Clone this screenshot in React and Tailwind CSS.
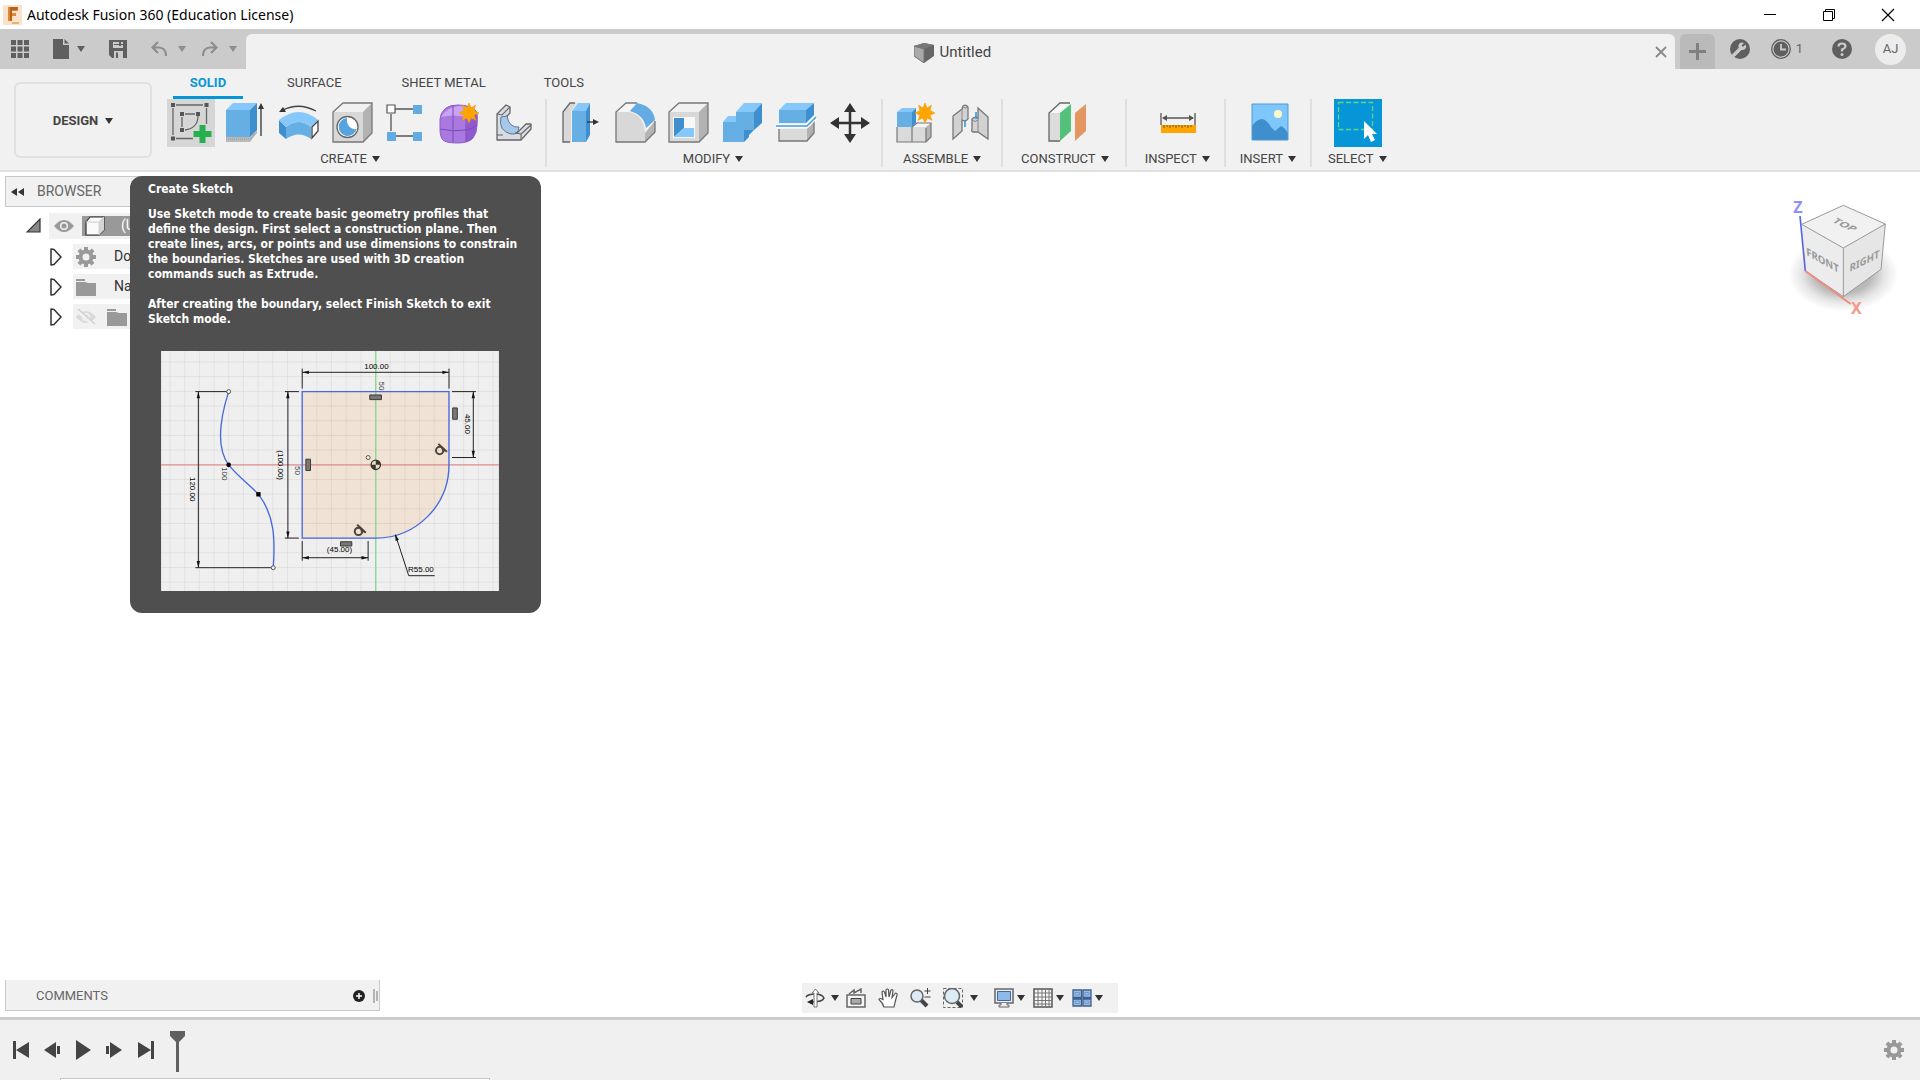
import React from "react";

const Caret = ({ className = "text-[#333]" }) => (
  <svg width="8" height="6" viewBox="0 0 8 6" className={`shrink-0 ${className}`} aria-hidden="true">
    <path d="M0 0H8L4 6Z" fill="currentColor" />
  </svg>
);

const Svg = ({ w = 48, h = 48, vb, children, className = "" }) => (
  <svg width={w} height={h} viewBox={vb || `0 0 ${w} ${h}`} className={`block shrink-0 ${className}`} fill="none" aria-hidden="true">
    {children}
  </svg>
);

const Sun = ({ x, y }) => (
  <path
    transform={`translate(${x} ${y})`}
    d="M0-10 2-5 6.400-7.800 5-2.600 10 0 5 2.200 7 7.300 2.200 5 0 10-2.200 5-7 7.300-5 2.200-10 0-5-2.600-6.400-7.800-2-5Z"
    fill="#ffa500"
    stroke="#f19a0a"
    strokeWidth=".6"
  />
);

const SketchIcon = () => (
  <Svg>
    <path d="M9 6H36M6 9V36M39.500 9V25M9 39.500H26M18 15H28M15 18V28M31 17C31 25 26 30 18 31" stroke="#666" strokeWidth="1.300" />
    <path d="M4 4h4v4H4zM37.500 4h4v4h-4zM4 37.500h4v4H4zM13 13h4v4h-4zM29 13h4v4h-4zM13 29h4v4h-4z" fill="#555" />
    <path d="M32.500 26h6v6h6v6h-6v6h-6v-6h-6v-6h6z" fill="#27ae4e" />
  </Svg>
);

const ExtrudeIcon = () => (
  <Svg>
    <path d="M5 38H29L36 31V34L29 43H5Z" fill="#b9b9b9" />
    <path d="M5 40H29L36 33" stroke="#9a9a9a" strokeWidth="1" strokeDasharray="1 1" />
    <path d="M5 11H29V38H5Z" fill="#66afe5" />
    <path d="M5 11 12 4H36L29 11Z" fill="#86c8fb" />
    <path d="M29 11 36 4V31L29 38Z" fill="#3f8fce" />
    <path d="M40 37V8" stroke="#333" strokeWidth="1.300" />
    <path d="M40 4 43 10H37Z" fill="#333" />
  </Svg>
);

const RevolveIcon = () => (
  <Svg>
    <path d="M4 21 11 28V40L4 34Z" fill="#3f8fce" />
    <path d="M11 28Q24 18 36 28V40Q24 31 11 40Z" fill="#66afe5" />
    <path d="M4 21Q24 5 43 21L36 28Q24 18 11 28Z" fill="#86c8fb" />
    <path d="M37 28 43 22V32L37 39Z" fill="#fff" stroke="#444" strokeWidth="1.300" />
    <path d="M8 11Q24 3 41 12" stroke="#444" strokeWidth="1.300" />
    <path d="M4 13 8 8 11 13Z" fill="#333" />
  </Svg>
);

const HoleIcon = () => (
  <Svg>
    <path d="M4 13 14 4H43L34 13Z" fill="#f1f1f1" />
    <path d="M34 13 43 4V34L34 43Z" fill="#b2b2b2" />
    <path d="M4 13H34V43H4Z" fill="#d8d8d8" />
    <path d="M4 43V13L14 4H43V34L34 43Z" stroke="#777" strokeWidth="1.300" />
    <circle cx="18.500" cy="28" r="10.500" fill="#fff" stroke="#666" strokeWidth="1.300" />
    <path d="M18 19A9 9 0 1 0 27.500 30C22 31 17 26 18 19Z" fill="#56a3df" />
  </Svg>
);

const PatternIcon = () => (
  <Svg>
    <path d="M12 10H30M8 15V32M12 37H30" stroke="#555" strokeWidth="1.300" />
    <path d="M4 6h8v8H4z" fill="#fff" stroke="#555" strokeWidth="1.200" />
    <path d="M30 6h9v9h-9zM4 33h9v9H4zM30 33h9v9h-9z" fill="#62abe3" />
  </Svg>
);

const FormIcon = () => (
  <Svg>
    <path d="M3 20Q3 14 9 9 13 6 21 6 33 6 39 12 41 14 40 26 40 34 36 39 32 44 20 44 9 44 6 41 3 38 3 30Z" fill="#a979e0" />
    <path d="M4 18Q10 8 22 7 33 7 38 12 34 19 29 18 16 15 4 18Z" fill="#c9a4f5" />
    <path d="M30 18Q37 17 40 14V27Q39 35 34 41L29 43Z" fill="#8f59cf" />
    <path d="M16 7V43M29 17V43M3 30Q15 33 29 31 36 30 40 26" stroke="#7b4bb9" strokeWidth="1" />
    <path d="M3 20Q3 14 9 9 13 6 21 6 33 6 39 12 41 14 40 26 40 34 36 39 32 44 20 44 9 44 6 41 3 38 3 30Z" stroke="#8d5ccb" strokeWidth="1" />
    <Sun x={32} y={14} />
  </Svg>
);

const SheetIcon = () => (
  <Svg>
    <path d="M6 15 15 6 19 8V14L14 19Q13 33 26 34L35 25H40V30L30 41H6Z" fill="#d9dde2" stroke="#666" strokeWidth="1.300" strokeLinejoin="round" />
    <path d="M10 18Q7 32 20 35 27 36 28 28 18 29 16 17Z" fill="#a9c8e8" stroke="#55779c" strokeWidth="1" />
    <path d="M6 15 11 16 19 8M30 41V35L40 26M6 36H12M30 35 24 34" stroke="#666" strokeWidth="1.100" />
  </Svg>
);

const PressPullIcon = () => (
  <Svg>
    <path d="M14 43H6V13L14 4H20L14 12Z" fill="#d8d8d8" />
    <path d="M13 43H6V13L13 4H18" stroke="#666" strokeWidth="1.300" />
    <path d="M15 12H29V43H15Z" fill="#66afe5" />
    <path d="M15 12 21 4H33L29 12Z" fill="#86c8fb" />
    <path d="M29 12 33 4V36L29 43Z" fill="#3f8fce" />
    <path d="M30 23H38" stroke="#333" strokeWidth="1.300" />
    <path d="M42 23 36 20V26Z" fill="#333" />
  </Svg>
);

const FilletIcon = () => (
  <Svg>
    <path d="M5 43V13H18Q33 16 34 34V43Z" fill="#d8d8d8" />
    <path d="M5 13 15 4H26L18 13Z" fill="#f5f5f5" />
    <path d="M34 34 44 22V34L34 43Z" fill="#b5b5b5" />
    <path d="M26 4H15L5 13V43H34L44 33V22" stroke="#777" strokeWidth="1.300" />
    <path d="M19 12 26 4Q42 7 44 21L35 29Q33 16 19 12Z" fill="#62abe3" />
  </Svg>
);

const ShellIcon = () => (
  <Svg>
    <path d="M4 13 14 4H43L34 13Z" fill="#f1f1f1" />
    <path d="M34 13 43 4V34L34 43Z" fill="#b2b2b2" />
    <path d="M4 13H34V43H4Z" fill="#d8d8d8" />
    <path d="M4 43V13L14 4H43V34L34 43Z" stroke="#777" strokeWidth="1.300" />
    <path d="M8 18H30V39H8Z" fill="#f8f8f8" />
    <path d="M9 19H19V29L9 38Z" fill="#3f8fce" />
    <path d="M9 38 19 29H29V38Z" fill="#86c8fb" />
  </Svg>
);

const CombineIcon = () => (
  <Svg>
    <path d="M4 23H17V13H35V31H25V43H4Z" fill="#66afe5" />
    <path d="M4 23 9 17H17V23ZM17 13 25 4H43L35 13Z" fill="#86c8fb" />
    <path d="M35 13 43 4V24L35 31ZM25 31H35L30 36V38L25 43Z" fill="#3f8fce" />
  </Svg>
);

const SplitIcon = () => (
  <Svg>
    <path d="M6 11H33V24H6Z" fill="#66afe5" />
    <path d="M6 11 13 4H41L33 11Z" fill="#86c8fb" />
    <path d="M33 11 41 4V16L33 24Z" fill="#3f8fce" />
    <path d="M6 30H34L41 23V34L34 42H6Z" fill="#dadada" />
    <path d="M34 30 41 23V34L34 42Z" fill="#b2b2b2" />
    <path d="M6 30V42H34L41 34V22" stroke="#777" strokeWidth="1.300" />
    <path d="M3 27H34L43 18" stroke="#fff" strokeWidth="4" />
    <path d="M3 27H34L43 18" stroke="#3d9fe0" strokeWidth="1.500" />
  </Svg>
);

const MoveIcon = () => (
  <Svg>
    <path d="M23 10V38M9 24H37" stroke="#333" strokeWidth="2.500" />
    <path d="M23 4 29 13H17ZM23 44 29 35H17ZM3 24 12 18V30ZM43 24 34 18V30Z" fill="#333" />
  </Svg>
);

const ComponentIcon = () => (
  <Svg>
    <path d="M4 28H19V43H4ZM19 28H33V43H19Z" fill="#dadada" />
    <path d="M19 28 24 24H38L33 28Z" fill="#f4f4f4" />
    <path d="M33 28 38 24V38L33 43Z" fill="#b5b5b5" />
    <path d="M4 28V43H33L38 38V24H24L19 28V43M33 29V43" stroke="#777" strokeWidth="1.200" />
    <path d="M4 13H19V28H4Z" fill="#66afe5" />
    <path d="M4 13 9 9H23L19 13Z" fill="#86c8fb" />
    <path d="M19 13 23 9V24L19 28Z" fill="#3f8fce" />
    <Sun x={32} y={14} />
  </Svg>
);

const JointIcon = () => (
  <Svg>
    <path d="M6 17 15 10 16 7Q19 5 21 8V20Q19 23 15 21V32L6 40Z" fill="#d2d2d2" stroke="#777" strokeWidth="1.300" />
    <path d="M15 10V21M16 8Q18 10 21 8" stroke="#888" />
    <path d="M31 9 41 18V40L31 33 26 33Q24 32 25 30V20Q28 17 31 19Z" fill="#d2d2d2" stroke="#777" strokeWidth="1.300" />
    <path d="M31 19V33M25 21Q28 24 31 21" stroke="#888" />
    <path d="M18 22V28M29 13V20" stroke="#1e9be0" strokeWidth="1.500" />
  </Svg>
);

const PlaneIcon = () => (
  <Svg>
    <path d="M7 42V14L18 4H28L18 14V42Z" fill="#dcdcdc" />
    <path d="M7 14 18 4H28L18 14Z" fill="#f6f6f6" />
    <path d="M18 42H7V14L18 4H28" stroke="#666" strokeWidth="1.300" />
    <path d="M18 14 29 5V32L18 42Z" fill="#53c17a" />
    <path d="M33 14 44 5V32L33 42Z" fill="#e3965f" />
  </Svg>
);

const MeasureIcon = () => (
  <Svg>
    <path d="M8 14V26M42 14V26M10 19H40" stroke="#555" strokeWidth="1.300" />
    <path d="M9 19 14 16V22ZM41 19 36 16V22Z" fill="#555" />
    <path d="M8 26H43V34H8Z" fill="#ffa500" />
    <path d="M11 26v3M14 26v2M17 26v3M20 26v2M23 26v3M26 26v2M29 26v3M32 26v2M35 26v3M38 26v2" stroke="#7d5a1a" />
  </Svg>
);

const ImageIcon = () => (
  <Svg>
    <path d="M6 5H42V41H6Z" fill="#7fc6fb" />
    <path d="M6 27Q11 20 16 20 20 20 25 28L29 32 35 27Q38 28 42 34V41H6Z" fill="#3f8fce" />
    <circle cx="32" cy="15" r="4" fill="#fff6c9" />
    <path d="M6 5H42V41H6Z" stroke="#4c9bd6" />
  </Svg>
);

const SelectIcon = () => (
  <Svg>
    <rect x="4.500" y="3.500" width="34" height="27" stroke="#5fd38c" strokeWidth="1.300" strokeDasharray="5 2.500" />
    <path d="M30 22V40L34 36 37 43 41 41 38 35H43Z" fill="#fff" />
  </Svg>
);

const groups = [
  { label: "CREATE", pad: "pl-1.5 pr-3", items: [["Create Sketch", SketchIcon], ["Extrude", ExtrudeIcon], ["Revolve", RevolveIcon], ["Hole", HoleIcon], ["Rectangular Pattern", PatternIcon], ["Create Form", FormIcon], ["Flange", SheetIcon]] },
  { label: "MODIFY", pad: "pl-1.5 pr-3", items: [["Press Pull", PressPullIcon], ["Fillet", FilletIcon], ["Shell", ShellIcon], ["Combine", CombineIcon], ["Split Body", SplitIcon], ["Move", MoveIcon]] },
  { label: "ASSEMBLE", pad: "pl-1 pr-2", items: [["New Component", ComponentIcon], ["Joint", JointIcon]] },
  { label: "CONSTRUCT", pad: "pl-2 pr-2.5", items: [["Offset Plane", PlaneIcon]] },
  { label: "INSPECT", pad: "px-2", items: [["Measure", MeasureIcon]] },
  { label: "INSERT", pad: "pl-1 pr-2", items: [["Insert Image", ImageIcon]] },
  { label: "SELECT", pad: "pl-1.5 pr-2", items: [["Select", SelectIcon]] },
];

const Group = ({ label, pad, items }) => (
  <div className="flex flex-col items-center border-r-2 border-[#dfdfdf] pr-1.5 pl-2.5 last:border-r-0">
    <div className="flex gap-1.5">
      {items.map(([name, Icon]) => (
        <button
          key={name}
          type="button"
          aria-label={name}
          className={name === "Create Sketch" ? "bg-[#d6d6d6]" : name === "Select" ? "bg-[#0696d7]" : ""}
        >
          <Icon />
        </button>
      ))}
    </div>
    <button type="button" className={`mt-1 flex h-4 items-center gap-[5px] text-[13px] ${pad}`}>
      {label} <Caret />
    </button>
  </div>
);

const Gear = ({ size = 20 }) => (
  <Svg w={size} h={size} vb="0 0 20 20">
    <g fill="#999">
      <path d="M8 0h4v20H8zM0 8h20v4H0z" />
      <path d="M8 0h4v20H8zM0 8h20v4H0z" transform="rotate(45 10 10)" />
    </g>
    <circle cx="10" cy="10" r="5.500" stroke="#999" strokeWidth="4" fill="#f1f1f1" />
  </Svg>
);

const Folder = () => (
  <Svg w={20} h={18}>
    <path d="M0 1h9v2H0zM0 4h9l3 1h8v13H0z" fill="#999" />
  </Svg>
);

const Eye = ({ off }) => (
  <Svg w={20} h={16}>
    <path d="M0 8Q10-4 20 8 10 20 0 8Z" fill={off ? "#dadada" : "#999"} />
    <circle cx="10" cy="8" r="4" fill="#f1f1f1" />
    <circle cx="10" cy="8" r="2.500" fill={off ? "#dadada" : "#999"} />
    {off && <path d="M1 1 18 16" stroke="#f1f1f1" strokeWidth="4" />}
    {off && <path d="M2 0 19 15" stroke="#d0d0d0" strokeWidth="1.500" />}
  </Svg>
);

const Expand = () => (
  <button type="button" aria-label="Expand" className="shrink-0">
    <Svg w={12} h={18}>
      <path d="M1 1 4 1.500 11 9 4 16.500 1 17Z" fill="#fff" stroke="#333" strokeWidth="1.500" strokeLinejoin="round" />
    </Svg>
  </button>
);

const Browser = () => (
  <section className="mt-1 ml-[5px] w-[375px] text-[14px] text-[#333]">
    <header className="flex h-[31px] items-center gap-[13px] border border-[#c8c8c8] bg-[#f1f1f1] pl-[5px] text-[#666]">
      <button type="button" aria-label="Collapse browser">
        <Svg w={13} h={8}>
          <path d="M0 4 6 0V8ZM7 4 13 0V8Z" fill="#333" />
        </Svg>
      </button>
      BROWSER
    </header>
    <div className="flex h-[37px] items-center pl-[21px]">
      <button type="button" aria-label="Collapse">
        <Svg w={15} h={15}>
          <path d="M14 1V14H1Z" fill="#888" stroke="#333" strokeWidth="1.200" />
        </Svg>
      </button>
      <div className="ml-2 flex h-[26px] flex-1 items-center bg-[#f1f1f1] pl-[5px]">
        <button type="button" aria-label="Visibility"><Eye /></button>
        <div className="ml-2 flex h-5 flex-1 items-center gap-4 bg-[#999] pl-[3px] text-white">
          <Svg w={20} h={20}>
            <path d="M1 6 5 1H19V14L14 19H1Z" fill="#fafafa" stroke="#333" strokeWidth="1.200" />
            <path d="M1 6H14V19M14 6 19 1" stroke="#ccc" />
            <path d="M14 6 19 1V14L14 19Z" fill="#d5d5d5" />
          </Svg>
          (U
        </div>
      </div>
    </div>
    <ul className="flex flex-col gap-[5px] pl-[45px]">
      <li className="flex items-center gap-[11px]">
        <Expand />
        <div className="flex h-[25px] flex-1 items-center gap-[18px] bg-[#f1f1f1] pl-[3px]">
          <Gear /> Do
        </div>
      </li>
      <li className="flex items-center gap-[11px]">
        <Expand />
        <div className="flex h-[25px] flex-1 items-center gap-[18px] bg-[#f1f1f1] pl-[3px]">
          <Folder /> Na
        </div>
      </li>
      <li className="flex items-center gap-[11px]">
        <Expand />
        <div className="flex h-[25px] flex-1 items-center gap-[11px] bg-[#f1f1f1] pl-[3px]">
          <Eye off /> <Folder />
        </div>
      </li>
    </ul>
  </section>
);

const lines = (n, start, step) => Array.from({ length: n }, (_, i) => start + i * step);

const Arrow = ({ x, y, r = 0 }) => <path d="M0 0 20-5V5Z" fill="#111" transform={`translate(${x} ${y}) rotate(${r})`} />;

const Tangent = ({ x, y }) => (
  <g transform={`translate(${x} ${y})`}>
    <circle r="11" stroke="#4c443d" strokeWidth="6" />
    <path d="M-4-20 22 4" stroke="#4c443d" strokeWidth="6" />
    <path d="M2-14 18 0 10 6Z" fill="#4c443d" />
  </g>
);

const SketchPreview = () => (
  <svg viewBox="64 33 1015 721" className="mt-6 ml-[13px] block h-[240px] w-[338px] font-['Liberation_Sans',Arial,sans-serif] font-normal" fill="none" fontSize="24">
    <path d="M64 33H1079V754H64Z" fill="#efefef" />
    <path d="M488 155H929V375A220 220 0 0 1 709 595H488Z" fill="#f0e2d4" />
    {lines(23, 91, 44.1).map((x) => (
      <path key={x} d={`M${x} 33V754`} stroke="#000" strokeOpacity=".06" strokeWidth="3" />
    ))}
    {lines(16, 66, 44.1).map((y) => (
      <path key={y} d={`M64 ${y}H1079`} stroke="#000" strokeOpacity=".06" strokeWidth="3" />
    ))}
    <path d="M64 375H1079" stroke="#e08e8e" strokeWidth="4" />
    <path d="M709 33V754" stroke="#86d98a" strokeWidth="4" />
    <path d="M488 155H929V375A220 220 0 0 1 709 595H488Z" stroke="#4668dc" strokeWidth="4" />
    <path d="M267 155C240 240 230 325 267 375 295 410 330 435 356 463 405 525 407 600 401 684" stroke="#4668dc" strokeWidth="4" />
    <g stroke="#222" strokeWidth="3">
      <path d="M488 86V146M929 86V146M488 97H929M167 155H262M167 684H394M176 155V684" />
      <path d="M436 155H478M436 595H478M445 155V595M488 604V663M686 604V663M488 654H686" />
      <path d="M938 155H1010M938 353H1010M1002 155V353M768 585 808 708H886" />
    </g>
    <Arrow x={488} y={97} />
    <Arrow x={929} y={97} r={180} />
    <Arrow x={176} y={155} r={90} />
    <Arrow x={176} y={684} r={-90} />
    <Arrow x={445} y={155} r={90} />
    <Arrow x={445} y={595} r={-90} />
    <Arrow x={488} y={654} />
    <Arrow x={686} y={654} r={180} />
    <Arrow x={1002} y={155} r={90} />
    <Arrow x={1002} y={353} r={-90} />
    <Arrow x={767} y={583} r={71} />
    <g fill="#efefef" stroke="#555" strokeWidth="3">
      <circle cx="267" cy="155" r="6" />
      <circle cx="401" cy="684" r="6" />
      <circle cx="686" cy="353" r="6" />
    </g>
    <circle cx="267" cy="375" r="7" fill="#000" />
    <path d="M350 457h13v13h-13z" fill="#000" />
    <circle cx="709" cy="375" r="14" fill="#e8dccf" stroke="#3b352f" strokeWidth="4" />
    <path d="M709 375V361A14 14 0 0 1 723 375ZM709 375V389A14 14 0 0 1 695 375Z" fill="#3b352f" />
    <path d="M691 165h35v14h-35zM603 606h34v13h-34zM499 358h14v34h-14zM940 204h14v34h-14z" fill="#777" stroke="#3f3a36" strokeWidth="3" />
    <Tangent x={901} y={332} />
    <Tangent x={657} y={575} />
    <g fill="#000">
      <text x="711" y="86" textAnchor="middle">100.00</text>
      <text x="600" y="637" textAnchor="middle">(45.00)</text>
      <text x="806" y="698">R55.00</text>
      <text transform="translate(152 448) rotate(90)" textAnchor="middle">120.00</text>
      <text transform="translate(416 376) rotate(90)" textAnchor="middle">(100.00)</text>
      <text transform="translate(977 252) rotate(90)" textAnchor="middle">45.00</text>
      <g fill="#444">
        <text transform="translate(246 402) rotate(90)" textAnchor="middle">100</text>
        <text transform="translate(467 392) rotate(90)" textAnchor="middle">50</text>
        <text transform="translate(718 138) rotate(90)" textAnchor="middle">50</text>
      </g>
    </g>
  </svg>
);

const Tooltip = () => (
  <div
    role="tooltip"
    className="absolute top-1 left-[130px] w-[411px] rounded-xl bg-[#4f4f4f] px-[18px] pt-1.5 pb-[22px] font-['DejaVu_Sans_Condensed','Noto_Sans',sans-serif] text-[12px] leading-[15px] font-bold text-white"
  >
    <h2>Create Sketch</h2>
    <p className="mt-2.5">
      Use Sketch mode to create basic geometry profiles that<br />
      define the design. First select a construction plane. Then<br />
      create lines, arcs, or points and use dimensions to constrain<br />
      the boundaries. Sketches are used with 3D creation<br />
      commands such as Extrude.
    </p>
    <p className="mt-[15px]">
      After creating the boundary, select Finish Sketch to exit<br />
      Sketch mode.
    </p>
    <SketchPreview />
  </div>
);

const ViewCube = () => (
  <svg width="160" height="168" viewBox="0 6 480 504" fill="none" className="shrink-0" aria-label="View cube">
    <defs>
      <radialGradient id="shade">
        <stop offset=".5" stopColor="#000" stopOpacity=".28" />
        <stop offset=".75" stopColor="#000" stopOpacity=".1" />
        <stop offset="1" stopColor="#000" stopOpacity="0" />
      </radialGradient>
    </defs>
    <ellipse cx="250" cy="312" rx="165" ry="112" fill="url(#shade)" />
    <path d="M125 163 250 106 376 162 250 234Z" fill="#f1f1f1" />
    <path d="M125 163 250 234V380L137 303Z" fill="#ececec" />
    <path d="M376 162 250 234V380L363 298Z" fill="#e6e6e6" />
    <path d="M125 163 250 106 376 162 250 234ZM250 234V380L363 298 376 162M250 380 137 303" stroke="#999" strokeWidth="3" strokeLinejoin="round" />
    <path d="M120 138 136 303" stroke="#5a66e8" strokeWidth="5" />
    <path d="M136 303 272 402" stroke="#f08c80" strokeWidth="6" />
    <g className="font-['Noto_Sans',sans-serif] font-bold">
      <text transform="matrix(1 .5 -.75 .5 246 170)" fontSize="32" textAnchor="middle" fill="#999">TOP</text>
      <text transform="matrix(.9 .5 .05 1 188 282)" fontSize="32" textAnchor="middle" fill="#999">FRONT</text>
      <text transform="matrix(.9 -.45 -.05 1 313 284)" fontSize="32" textAnchor="middle" fill="#999">RIGHT</text>
      <text x="100" y="129" fontSize="48" fill="#8f8ffa">Z</text>
      <text x="273" y="432" fontSize="48" fill="#f7978c">X</text>
    </g>
  </svg>
);

const NavBar = () => (
  <div className="mb-1 flex h-[30px] w-[316px] items-center bg-[#f1f1f1] pl-[3px]">
    <button type="button" aria-label="Orbit" className="flex items-center gap-1.5">
      <Svg w={20} h={20}>
        <path d="M1 9Q3 6 10 6T19 10Q18 14 6 14" stroke="#444" strokeWidth="1.500" />
        <path d="M9 19V5H7L10.500 1 14 5H12V19Z" fill="#fff" stroke="#777" />
        <path d="M2 14 8 11V17Z" fill="#222" />
      </Svg>
      <Caret />
    </button>
    <button type="button" aria-label="Look At" className="ml-[7px]">
      <Svg w={20} h={20}>
        <path d="M1 7H19V19H1Z" fill="#f5f5f5" stroke="#666" strokeWidth="1.500" />
        <path d="M5 10.500H15V16H5Z" fill="#aaa" stroke="#444" />
        <path d="M3 6 8 2V5L15 1V5" stroke="#666" strokeWidth="1.500" />
      </Svg>
    </button>
    <button type="button" aria-label="Pan" className="ml-3">
      <Svg w={20} h={20}>
        <path d="M6 19Q5 15 1 11.500 1 9.500 5 11.500L4 4Q5 2 6.500 4L8 9V2Q9.500 0 10.500 2L11 9 13 2Q15 1 15 3L14 9.500 17.500 5Q19.500 5 19 7 17 14 16 19Z" fill="#fff" stroke="#555" strokeWidth="1.200" />
      </Svg>
    </button>
    <button type="button" aria-label="Zoom" className="ml-3">
      <Svg w={21} h={20}>
        <path d="M11 12 17 18" stroke="#444" strokeWidth="4" />
        <circle cx="7" cy="8" r="6" fill="#dceaf6" stroke="#666" strokeWidth="1.500" />
        <path d="M17.500 0V6M14.500 3H20.500M14.500 9H20.500" stroke="#444" />
      </Svg>
    </button>
    <button type="button" aria-label="Zoom Window" className="ml-3 flex items-center gap-[7px]">
      <Svg w={20} h={20}>
        <path d="M.5.500H19.500V19.500H.5Z" stroke="#666" strokeDasharray="3 2" />
        <path d="M14 14 19 19" stroke="#444" strokeWidth="4" />
        <circle cx="9" cy="8" r="7.500" fill="#dcecf6" stroke="#666" strokeWidth="1.500" />
      </Svg>
      <Caret />
    </button>
    <button type="button" aria-label="Display Settings" className="ml-4 flex items-center gap-[3px]">
      <Svg w={20} h={20}>
        <path d="M1 1H19V15H1Z" fill="#eee" stroke="#666" strokeWidth="1.500" />
        <path d="M3.500 3.500H16.500V12.500H3.500Z" fill="#8fb9e6" stroke="#3f6aa5" />
        <path d="M7 15V17H5V19H15V17H13V15" fill="#eee" stroke="#666" />
      </Svg>
      <Caret />
    </button>
    <button type="button" aria-label="Grid and Snaps" className="ml-2 flex items-center gap-[3px]">
      <Svg w={20} h={20}>
        <path d="M1 1H19V19H1Z" fill="#f8f8f8" stroke="#555" strokeWidth="1.500" />
        <path d="M5 1V19M9 1V19M12.500 1V19M16 1V19M1 5H19M1 9H19M1 12.500H19M1 16H19" stroke="#777" />
      </Svg>
      <Caret />
    </button>
    <button type="button" aria-label="Viewports" className="ml-2 flex items-center gap-[3px]">
      <Svg w={20} h={20}>
        <path d="M1 2H9.500V9.500H1ZM11 2H19V9.500H11ZM1 11H9.500V18H1ZM11 11H19V18H11Z" fill="#9bbde3" stroke="#3f5f8f" strokeWidth="1.300" />
        <path d="M3 4.500H7.500V7H3ZM13 4.500H17V7H13ZM3 13H7.500V15.500H3ZM13 13H17V15.500H13Z" stroke="#6f9ccf" />
      </Svg>
      <Caret />
    </button>
  </div>
);

const TitleBar = () => (
  <header className="flex h-[29px] items-center bg-white pl-[3px] font-['Noto_Sans','Open_Sans',sans-serif] text-[14px] text-black">
    <Svg w={19} h={20}>
      <path d="M0 0H19V20H0Z" fill="#fbe3cb" />
      <path d="M5 2H15V6H9V8H13V11H9V16H5Z" fill="#e0883a" />
      <path d="M7 2H15L14 5H9V16H7Z" fill="#b5621d" />
      <path d="M9 17H16V19H9Z" fill="#f2b26f" />
    </Svg>
    <h1 className="ml-[5px] flex-1 text-[14px]">Autodesk Fusion 360 (Education License)</h1>
    <div className="flex items-center gap-[45px] pr-[25px]">
      <button type="button" aria-label="Minimize">
        <Svg w={14} h={14}><path d="M1 6.500H13" stroke="#000" /></Svg>
      </button>
      <button type="button" aria-label="Restore">
        <Svg w={14} h={14}><path d="M1.500 3.500H10.500V12.500H1.500ZM3.500 3.500V1.500H12.500V10.500H10.500" stroke="#000" /></Svg>
      </button>
      <button type="button" aria-label="Close">
        <Svg w={14} h={14}><path d="M1 1 13 13M13 1 1 13" stroke="#000" strokeWidth="1.200" /></Svg>
      </button>
    </div>
  </header>
);

const TabBar = () => (
  <div className="flex h-10 bg-[#cbcbcb] text-[#666]">
    <div className="flex w-[246px] shrink-0 items-center pl-[11px]">
      <button type="button" aria-label="Data panel">
        <Svg w={18} h={18}>
          <path d="M0 0h5v5H0zM6.500 0h5v5h-5zM13 0h5v5h-5zM0 6.500h5v5H0zM6.500 6.500h5v5h-5zM13 6.500h5v5h-5zM0 13h5v5H0zM6.500 13h5v5h-5zM13 13h5v5h-5z" fill="#5f5f5f" />
        </Svg>
      </button>
      <button type="button" aria-label="File" className="ml-6 flex items-center gap-2">
        <Svg w={16} h={20}><path d="M0 0H10V6H16V20H0ZM11.500 0 16 4.500H11.500Z" fill="#5f5f5f" /></Svg>
        <Caret className="text-[#5f5f5f]" />
      </button>
      <button type="button" aria-label="Save" className="ml-6">
        <Svg w={18} h={18}>
          <path d="M0 0H18V18H3L0 15Z" fill="#5f5f5f" />
          <path d="M4 2H14V8H4ZM5 11H14V18H5Z" fill="#cbcbcb" />
          <path d="M10 2H12V6H10ZM7 12.500H9V18H7ZM5 4H14V5H5Z" fill="#5f5f5f" />
        </Svg>
      </button>
      <button type="button" aria-label="Undo" className="ml-6 flex items-center gap-[11px]">
        <Svg w={16} h={16}><path d="M7 1 1.500 6.500 7 12M2 6.500H8Q15 7 15 15" stroke="#8e8e8e" strokeWidth="2.200" /></Svg>
        <Caret className="text-[#8e8e8e]" />
      </button>
      <button type="button" aria-label="Redo" className="ml-4 flex items-center gap-[11px]">
        <Svg w={16} h={16}><path d="M9 1 14.500 6.500 9 12M14 6.500H8Q1 7 1 15" stroke="#8e8e8e" strokeWidth="2.200" /></Svg>
        <Caret className="text-[#8e8e8e]" />
      </button>
    </div>
    <div className="mt-[5px] flex flex-1 items-center rounded-t-md bg-[#f1f1f1] pr-2 text-[#444]">
      <div className="flex flex-1 items-center justify-center gap-[5px] pt-0.5 pl-1 text-[15px]">
        <Svg w={21} h={20}>
          <path d="M0 3 10 0 20 2V13L10 20 0 13Z" fill="#666" />
          <path d="M0 3 10 6V20L0 13Z" fill="#a9a9a9" stroke="#777" />
          <path d="M0 3 10 0 20 2 10 6Z" fill="#777" />
        </Svg>
        Untitled
      </div>
      <button type="button" aria-label="Close tab">
        <Svg w={12} h={12}><path d="M1 1 11 11M11 1 1 11" stroke="#888" strokeWidth="1.800" /></Svg>
      </button>
    </div>
    <button type="button" aria-label="New tab" className="mt-[5px] ml-[5px] flex w-[35px] items-center justify-center rounded-t-md bg-[#bababa]">
      <Svg w={17} h={17}><path d="M8.500 0V17M0 8.500H17" stroke="#808080" strokeWidth="3" /></Svg>
    </button>
    <div className="flex items-center pr-3.5 pl-[15px] text-[13px]">
      <button type="button" aria-label="Extensions">
        <Svg w={20} h={20}>
          <circle cx="10" cy="10" r="10" fill="#5f5f5f" />
          <path d="M4 16 11 9" stroke="#cbcbcb" strokeWidth="3.500" strokeLinecap="round" />
          <path d="M15.500 5.500 13 8 11.500 6.500 14 4Q10 2.500 8.500 6 8 9 10.500 10.500 14 12 16 9 16.500 7 15.500 5.500Z" fill="#cbcbcb" />
          <path d="M1 19 5 15" stroke="#cbcbcb" strokeWidth="2" />
        </Svg>
      </button>
      <button type="button" aria-label="Job status" className="ml-[21px] flex items-center gap-1">
        <Svg w={21} h={20}>
          <circle cx="10" cy="10" r="9.300" stroke="#5f5f5f" strokeWidth="1.300" />
          <circle cx="10" cy="10" r="7.500" fill="#5f5f5f" />
          <path d="M10 5V10.500H15" stroke="#cbcbcb" strokeWidth="1.800" />
        </Svg>
        1
      </button>
      <button type="button" aria-label="Help" className="ml-[29px]">
        <Svg w={20} h={20}>
          <circle cx="10" cy="10" r="10" fill="#5f5f5f" />
          <path d="M6.500 7.500Q6.500 4.500 10 4.500T13.500 7.500Q13.500 9 10 10.500V12.500" stroke="#cbcbcb" strokeWidth="2.200" />
          <circle cx="10" cy="15.500" r="1.500" fill="#cbcbcb" />
        </Svg>
      </button>
      <button type="button" aria-label="Account" className="ml-[23px] h-[31px] w-[31px] rounded-full bg-[#ececec] text-[13px]">AJ</button>
    </div>
  </div>
);

const Toolbar = () => (
  <div className="flex h-[103px] border-b-2 border-[#e0e0e0] bg-[#f1f1f1] text-[#444]">
    <button type="button" className="mt-[13px] ml-3.5 flex h-[76px] w-[138px] shrink-0 items-center justify-center gap-[7px] rounded-md border-2 border-[#e0e0e0] pt-px text-[13px] font-bold">
      DESIGN <Caret />
    </button>
    <div className="ml-[5px]">
      <nav className="flex h-[30px] items-stretch pl-4 text-[13px]">
        <button type="button" className="w-[70px] border-b-[3px] border-[#0696d7] pt-px font-bold text-[#0696d7]">SOLID</button>
        <button type="button" className="ml-11 pb-0.5">SURFACE</button>
        <button type="button" className="ml-[60px] pb-0.5">SHEET METAL</button>
        <button type="button" className="ml-[58px] pb-0.5">TOOLS</button>
      </nav>
      <div className="flex">
        {groups.map((g) => (
          <Group key={g.label} {...g} />
        ))}
      </div>
    </div>
  </div>
);

const Timeline = () => (
  <footer className="border-t-[3px] border-[#cbcbcb] bg-[#f0f0f0]">
    <div className="flex h-[57px] items-center pt-0.5 pr-4 pl-[13px]">
      <button type="button" aria-label="Go to start"><Svg w={16} h={18}><path d="M0 0h3v18H0zM3 9 16 1V17Z" fill="#444" /></Svg></button>
      <button type="button" aria-label="Step back" className="ml-[15px]"><Svg w={16} h={18}><path d="M0 9 12 1V17ZM13 5h3v8h-3z" fill="#444" /></Svg></button>
      <button type="button" aria-label="Play" className="ml-4"><Svg w={15} h={20}><path d="M0 0 15 10 0 20Z" fill="#444" /></Svg></button>
      <button type="button" aria-label="Step forward" className="ml-[15px]"><Svg w={16} h={18}><path d="M16 9 4 1V17ZM0 5h3v8H0z" fill="#444" /></Svg></button>
      <button type="button" aria-label="Go to end" className="ml-4"><Svg w={16} h={18}><path d="M13 0h3v18h-3zM13 9 0 1V17Z" fill="#444" /></Svg></button>
      <button type="button" aria-label="Timeline marker" className="mt-1 ml-4">
        <Svg w={15} h={41}><path d="M0 0H15V5L9 11V41H6V11L0 5Z" fill="#606060" /></Svg>
      </button>
      <button type="button" aria-label="Timeline settings" className="ml-auto"><Gear /></button>
    </div>
    <div className="flex h-[3px] pt-px pl-[60px]">
      <div className="w-[430px] border border-b-0 border-[#c8c8c8] bg-white" />
    </div>
  </footer>
);

export default function App() {
  return (
    <div className="flex min-h-screen flex-col bg-white font-['Roboto','Liberation_Sans',sans-serif]">
      <TitleBar />
      <TabBar />
      <Toolbar />
      <main className="relative flex flex-1 flex-col justify-between">
        <div className="flex items-start justify-between">
          <Browser />
          <ViewCube />
        </div>
        <div className="grid grid-cols-[1fr_auto_1fr] items-end">
          <div className="mb-1.5 ml-[5px] flex h-[31px] w-[375px] items-center border border-t-0 border-[#c8c8c8] bg-[#f1f1f1] pt-0.5 pr-px pl-[30px] text-[13px] text-[#666]">
            <span className="flex-1">COMMENTS</span>
            <button type="button" aria-label="Add comment">
              <Svg w={12} h={12}>
                <circle cx="6" cy="6" r="6" fill="#222" />
                <path d="M6 3V9M3 6H9" stroke="#fff" strokeWidth="1.500" />
              </Svg>
            </button>
            <Svg w={5} h={14} className="ml-2"><path d="M1 0V14M4 2V12" stroke="#777" /></Svg>
          </div>
          <NavBar />
        </div>
        <Tooltip />
      </main>
      <Timeline />
    </div>
  );
}
